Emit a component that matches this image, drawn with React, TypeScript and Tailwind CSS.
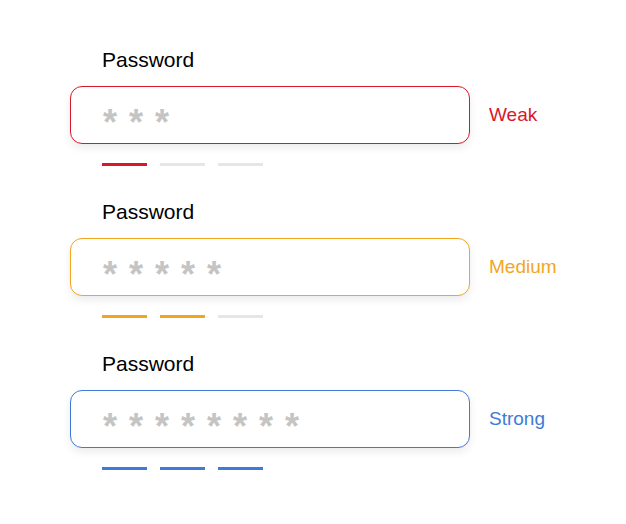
import type { ReactNode } from 'react';

type Strength = 'weak' | 'medium' | 'strong';

interface Tone {
  label: string;
  border: string;
  text: string;
  bar: string;
  filled: number;
}

const TONES: Record<Strength, Tone> = {
  weak: {
    label: 'Weak',
    border: 'border-[#d7192d]',
    text: 'text-[#d7192d]',
    bar: 'bg-[#d7192d]',
    filled: 1,
  },
  medium: {
    label: 'Medium',
    border: 'border-[#f2a51f]',
    text: 'text-[#f2a51f]',
    bar: 'bg-[#f2a51f]',
    filled: 2,
  },
  strong: {
    label: 'Strong',
    border: 'border-[#3f7ad9]',
    text: 'text-[#3f7ad9]',
    bar: 'bg-[#3f7ad9]',
    filled: 3,
  },
};

const FIELDS: { strength: Strength; length: number }[] = [
  { strength: 'weak', length: 3 },
  { strength: 'medium', length: 5 },
  { strength: 'strong', length: 8 },
];

function PasswordField({ strength, length }: { strength: Strength; length: number }): ReactNode {
  const tone = TONES[strength];
  return (
    <div className="flex flex-col">
      <span className="ml-8 text-[21px] leading-6 text-black">Password</span>
      <div className="mt-[14px] flex items-center">
        <div
          className={`flex h-[58px] w-[400px] items-center rounded-xl border bg-white pl-8 shadow-[0_4px_8px_rgba(0,0,0,0.08)] ${tone.border}`}
        >
          {/* masked value, one glyph per character */}
          <span className="flex gap-[12px] text-[#c4c4c4]">
            {Array.from({ length }, (_, i) => (
              <span key={i} className="w-[14px] pt-[16px] text-[36px] font-bold leading-[30px]">
                *
              </span>
            ))}
          </span>
        </div>
        <span className={`ml-[19px] text-[19px] leading-6 ${tone.text}`}>{tone.label}</span>
      </div>
      <div className="ml-8 mt-[19px] flex gap-[13px]">
        {[0, 1, 2].map((i) => (
          <span
            key={i}
            className={`h-[3px] w-[45px] ${i < tone.filled ? tone.bar : 'bg-[#e6e6e6]'}`}
          />
        ))}
      </div>
    </div>
  );
}

export default function App(): ReactNode {
  return (
    <div className="min-h-[524px] w-[626px] bg-white pl-[70px] pt-12 font-['Liberation_Sans',Arial,sans-serif]">
      <div className="flex flex-col gap-[34px]">
        {FIELDS.map((f) => (
          <PasswordField key={f.strength} strength={f.strength} length={f.length} />
        ))}
      </div>
    </div>
  );
}
